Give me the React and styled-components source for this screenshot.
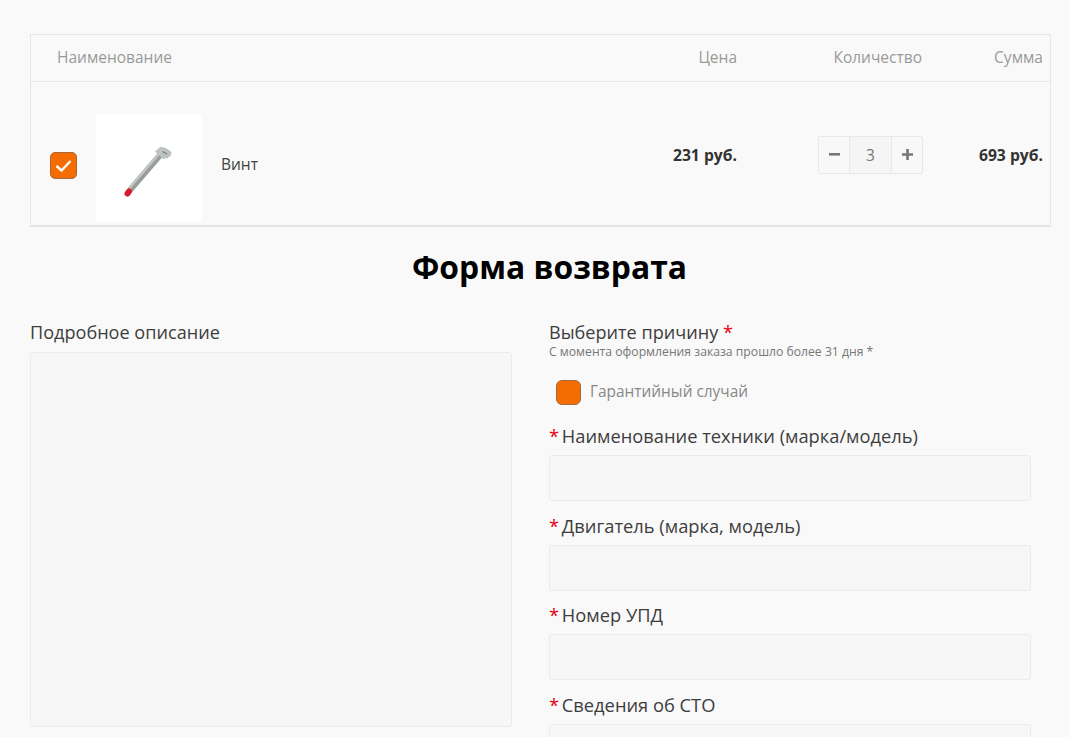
import React from "react";
import styled, { createGlobalStyle } from "styled-components";

const Global = createGlobalStyle`
  html, body { margin: 0; padding: 0; background: #f9f9f9; overflow: hidden; }
  body { font-family: "Open Sans", "Noto Sans", sans-serif; color: #333; }
`;

const Page = styled.div`
  width: 1069px;
  height: 737px;
  overflow: hidden;
  box-sizing: border-box;
  padding: 34px 18px 0 30px;
`;

const Table = styled.div`
  border: 1px solid #e6e6e6;
  border-bottom: 2px solid #e4e4e4;
  height: 193px;
  box-sizing: border-box;
`;

const HeadRow = styled.div`
  display: grid;
  grid-template-columns: 1fr 121px 185px 121px;
  height: 47px;
  box-sizing: border-box;
  border-bottom: 1px solid #e6e6e6;
  padding: 0 7px 0 26px;
  align-items: center;
`;

const HeadCell = styled.div`
  font-size: 15.5px;
  color: #999;
  padding-bottom: 2px;
  text-align: ${(p) => (p.$right ? "right" : "left")};
`;

const ItemRow = styled.div`
  display: grid;
  grid-template-columns: 1fr 121px 185px 121px;
  height: 144px;
  padding: 0 7px 0 19px;
  box-sizing: border-box;
`;

const ItemInfo = styled.div`
  display: flex;
  align-items: center;
  padding-top: 23px;
`;

const Check = styled.div`
  width: 27px;
  height: 27px;
  box-sizing: border-box;
  background: #f56d00;
  border: 1px solid #a8683a;
  border-radius: 5px;
  display: flex;
  align-items: center;
  justify-content: center;
`;

const Thumb = styled.div`
  width: 106px;
  height: 108px;
  margin: 5px 0 0 19px;
  background: #fff;
  display: flex;
  align-items: center;
  justify-content: center;
`;

const ItemName = styled.div`
  margin: 0 0 3px 19px;
  font-size: 15.5px;
  color: #444;
`;

const Price = styled.div`
  font-size: 15.7px;
  font-weight: 700;
  color: #333;
  text-align: right;
  align-self: center;
  padding-top: 1px;
`;

const QtyCell = styled.div`
  display: flex;
  justify-content: flex-end;
  align-items: center;
  padding-top: 1px;
`;

const Stepper = styled.div`
  display: flex;
  height: 38px;
  margin-right: -1px;
  box-sizing: border-box;
  border: 1px solid #e8e8e8;
  border-radius: 2px;
`;

const StepBtn = styled.div`
  width: 30px;
  display: flex;
  align-items: center;
  justify-content: center;
  background: #f8f8f8;
`;

const StepValue = styled.div`
  width: 43px;
  box-sizing: border-box;
  border-left: 1px solid #e8e8e8;
  border-right: 1px solid #e8e8e8;
  background: #f5f5f5;
  color: #777;
  font-size: 15.5px;
  display: flex;
  align-items: center;
  justify-content: center;
`;

const Title = styled.h1`
  margin: 18px 0 0;
  padding-left: 18px;
  font-size: 31.8px;
  line-height: 44px;
  font-weight: 700;
  color: #000;
  text-align: center;
`;

const Form = styled.div`
  display: grid;
  grid-template-columns: 482px 482px;
  column-gap: 37px;
  margin-top: 30px;
`;

const Column = styled.div`
  display: flex;
  flex-direction: column;
`;

const Label = styled.div`
  font-size: 18.1px;
  line-height: 26px;
  color: #3d3d3d;
  white-space: nowrap;
`;

const FieldLabel = styled(Label)`
  font-size: 18.3px;
`;

const Star = styled.span`
  color: #e3000f;
`;

const LeadStar = styled(Star)`
  margin-right: -2px;
`;

const Note = styled.div`
  font-size: 12.2px;
  line-height: 14px;
  color: #777;
`;

const TextArea = styled.div`
  height: 375px;
  margin-top: 7px;
  box-sizing: border-box;
  background: #f7f7f7;
  border: 1px solid #ebebeb;
  border-radius: 3px;
`;

const RadioRow = styled.div`
  display: flex;
  align-items: center;
  margin: 21px 0 0 7px;
  height: 25px;
`;

const Radio = styled.div`
  width: 25px;
  height: 25px;
  box-sizing: border-box;
  background: #f56d00;
  border: 1px solid #a8683a;
  border-radius: 6px;
`;

const RadioText = styled.div`
  margin-left: 9px;
  padding-bottom: 2px;
  font-size: 15.4px;
  color: #888;
`;

const Field = styled.div`
  margin-top: ${(p) => p.$top}px;
`;

const Input = styled.div`
  height: 46px;
  margin-top: 6px;
  box-sizing: border-box;
  background: #f7f7f7;
  border: 1px solid #ebebeb;
  border-radius: 3px;
`;

const Screw = () => (
  <svg width="106" height="108" viewBox="0 0 106 108">
    <path d="M34 76 L65 40" stroke="#989d98" strokeWidth="6" fill="none" />
    <path d="M33 74.5 L64 38.5" stroke="#c3c7c3" strokeWidth="2.6" fill="none" />
    <path d="M59 37.5 L64 33 C68 33 73 35 75.5 38.5 C75.5 41 74 43 71.5 44 L67 45 Z" fill="#bdc3be" />
    <path d="M66.5 37.5 L71 40" stroke="#7d837e" strokeWidth="1.3" />
    <path d="M31.5 79.5 L33 77.5" stroke="#d81a30" strokeWidth="6" strokeLinecap="round" />
  </svg>
);

const Tick = () => (
  <svg width="17" height="14" viewBox="0 0 17 14" fill="none">
    <path d="M1.5 7 L6.5 11.5 L15.5 2" stroke="#fff" strokeWidth="2.4" />
  </svg>
);

const Minus = () => (
  <svg width="11" height="11" viewBox="0 0 11 11">
    <rect x="0" y="4" width="11" height="2.6" fill="#777" />
  </svg>
);

const Plus = () => (
  <svg width="11" height="11" viewBox="0 0 11 11">
    <path d="M0 4.2H4.2V0H6.8V4.2H11V6.8H6.8V11H4.2V6.8H0Z" fill="#777" />
  </svg>
);

export default function App() {
  return (
    <Page>
      <Global />
      <Table>
        <HeadRow>
          <HeadCell>Наименование</HeadCell>
          <HeadCell $right>Цена</HeadCell>
          <HeadCell $right>Количество</HeadCell>
          <HeadCell $right>Сумма</HeadCell>
        </HeadRow>
        <ItemRow>
          <ItemInfo>
            <Check><Tick /></Check>
            <Thumb><Screw /></Thumb>
            <ItemName>Винт</ItemName>
          </ItemInfo>
          <Price>231 руб.</Price>
          <QtyCell>
            <Stepper>
              <StepBtn><Minus /></StepBtn>
              <StepValue>3</StepValue>
              <StepBtn><Plus /></StepBtn>
            </Stepper>
          </QtyCell>
          <Price>693 руб.</Price>
        </ItemRow>
      </Table>
      <Title>Форма возврата</Title>
      <Form>
        <Column>
          <Label>Подробное описание</Label>
          <TextArea />
        </Column>
        <Column>
          <Label>Выберите причину <Star>*</Star></Label>
          <Note>С момента оформления заказа прошло более 31 дня *</Note>
          <RadioRow>
            <Radio />
            <RadioText>Гарантийный случай</RadioText>
          </RadioRow>
          <Field $top={18}>
            <FieldLabel><LeadStar>*</LeadStar> Наименование техники (марка/модель)</FieldLabel>
            <Input />
          </Field>
          <Field $top={12}>
            <FieldLabel><LeadStar>*</LeadStar> Двигатель (марка, модель)</FieldLabel>
            <Input />
          </Field>
          <Field $top={11}>
            <FieldLabel><LeadStar>*</LeadStar> Номер УПД</FieldLabel>
            <Input />
          </Field>
          <Field $top={12}>
            <FieldLabel><LeadStar>*</LeadStar> Сведения об СТО</FieldLabel>
            <Input />
          </Field>
        </Column>
      </Form>
    </Page>
  );
}
